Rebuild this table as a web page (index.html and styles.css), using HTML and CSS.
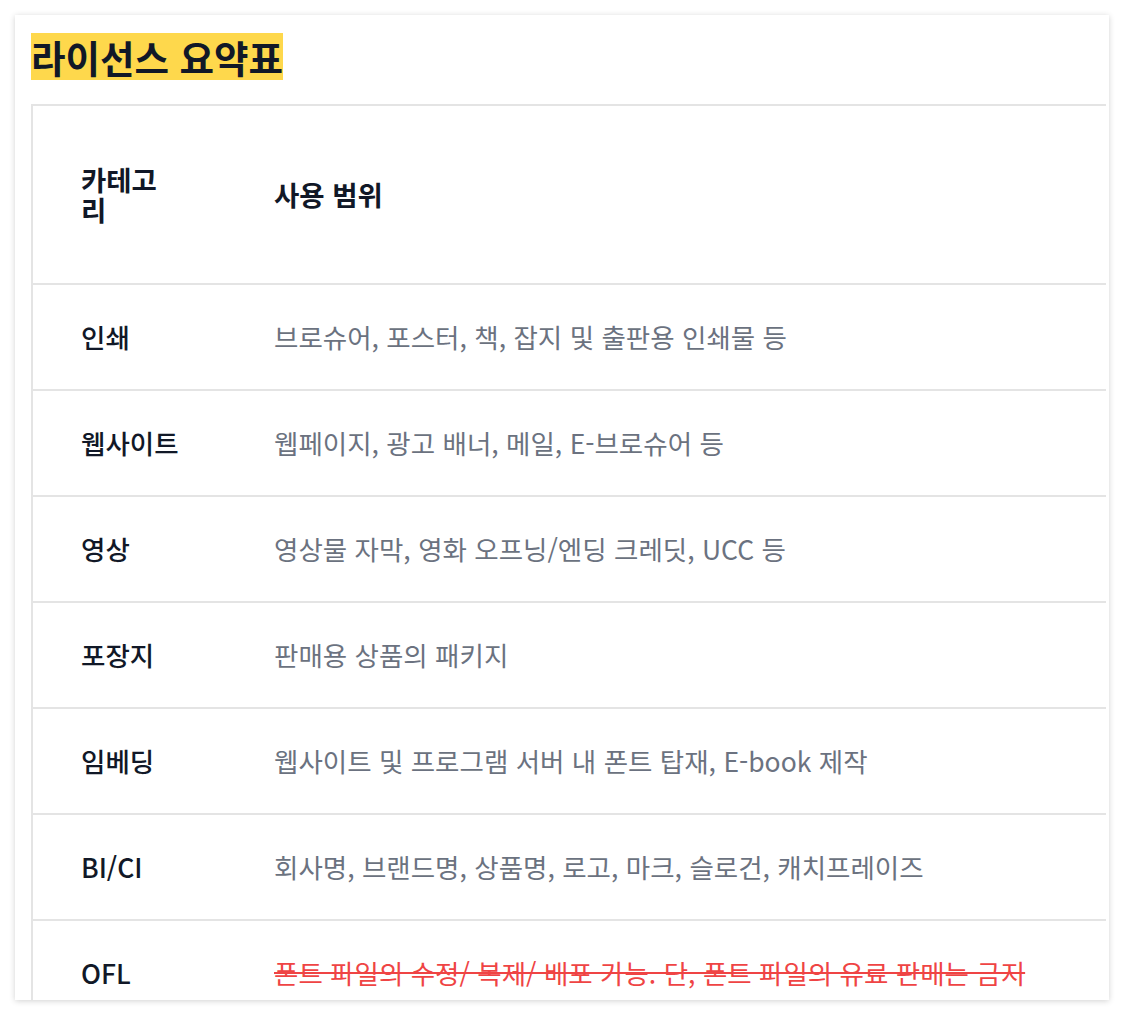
FILE: index.html
```html
<!DOCTYPE html>
<html lang="ko">
<head>
    <meta charset="UTF-8">
    <meta name="viewport" content="width=device-width, initial-scale=1.0">
    <title>라이선스 요약표</title>
    <link rel="stylesheet" href="styles.css">
</head>
<body>

    <!-- License summary card -->
    <div class="card">
        <h2 class="title"><span class="highlight">라이선스 요약표</span></h2>

        <div class="table-wrap">
            <table class="license-table">
                <thead>
                    <tr>
                        <th class="col-cat">카테고리</th>
                        <th>사용 범위</th>
                    </tr>
                </thead>
                <tbody>
                    <tr>
                        <td class="col-cat">인쇄</td>
                        <td>브로슈어, 포스터, 책, 잡지 및 출판용 인쇄물 등</td>
                    </tr>
                    <tr>
                        <td class="col-cat">웹사이트</td>
                        <td>웹페이지, 광고 배너, 메일, E-브로슈어 등</td>
                    </tr>
                    <tr>
                        <td class="col-cat">영상</td>
                        <td>영상물 자막, 영화 오프닝/엔딩 크레딧, UCC 등</td>
                    </tr>
                    <tr>
                        <td class="col-cat">포장지</td>
                        <td>판매용 상품의 패키지</td>
                    </tr>
                    <tr>
                        <td class="col-cat">임베딩</td>
                        <td>웹사이트 및 프로그램 서버 내 폰트 탑재, E-book 제작</td>
                    </tr>
                    <tr>
                        <td class="col-cat">BI/CI</td>
                        <td>회사명, 브랜드명, 상품명, 로고, 마크, 슬로건, 캐치프레이즈</td>
                    </tr>
                    <tr>
                        <td class="col-cat">OFL</td>
                        <td><span class="banned">폰트 파일의 수정/ 복제/ 배포 가능. 단, 폰트 파일의 유료 판매는 금지</span></td>
                    </tr>
                </tbody>
            </table>
        </div>
    </div>

</body>
</html>
```

FILE: styles.css
```css
body {
    font-family: "Noto Sans CJK KR", "Noto Sans", sans-serif;
    background: #fff;
    margin: 0;
    padding: 15px;
}

/* Card */
.card {
    width: 1094px;
    height: 985px;
    box-sizing: border-box;
    padding: 18px 3px 0 16px;
    background: #fff;
    box-shadow: 0 1px 6px rgba(0, 0, 0, 0.18);
    overflow: hidden;
}

.title {
    margin: 0 0 24px;
    font-size: 37.5px;
    font-weight: 700;
    color: #111827;
    line-height: 47px;
}

.title .highlight {
    display: inline-block;
    background: #fed84c;
}

/* Table */
.table-wrap {
    overflow: hidden;
}

.license-table {
    width: 1120px;
    border-collapse: collapse;
    table-layout: fixed;
    border: 2px solid #e4e4e4;
}

.license-table tr {
    border-bottom: 2px solid #e4e4e4;
}

.license-table th,
.license-table td {
    text-align: left;
    padding: 39px 48px;
    vertical-align: middle;
}

.license-table th {
    font-size: 27.5px;
    font-weight: 700;
    line-height: 30px;
    color: #111827;
    padding-top: 58px;
    padding-bottom: 59px;
}

.license-table td {
    font-size: 26.5px;
    line-height: 26px;
    color: #6b7280;
}

.license-table .col-cat {
    width: 97px;
    color: #111827;
    font-weight: 500;
}

.license-table td.col-cat {
    white-space: nowrap;
}

.license-table th.col-cat {
    font-weight: 700;
}

.banned {
    color: #ef4444;
    text-decoration: line-through;
}
```
